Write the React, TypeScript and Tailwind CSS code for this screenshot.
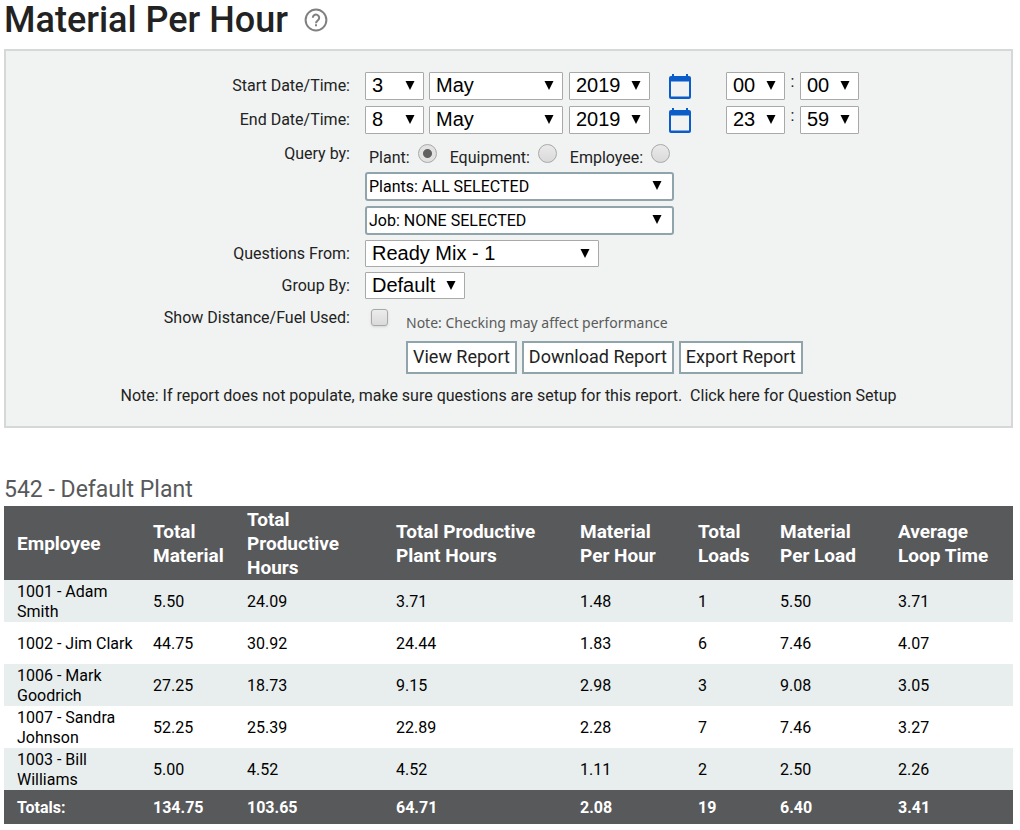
import { useState } from 'react';
import type { ReactNode } from 'react';

const columns = [
  { label: 'Employee', width: 'w-[136px]' },
  { label: 'Total Material', width: 'w-[94px]' },
  { label: 'Total Productive Hours', width: 'w-[149px]' },
  { label: 'Total Productive Plant Hours', width: 'w-[184px]' },
  { label: 'Material Per Hour', width: 'w-[118px]' },
  { label: 'Total Loads', width: 'w-[82px]' },
  { label: 'Material Per Load', width: 'w-[118px]' },
  { label: 'Average Loop Time', width: 'w-[128px]' }
];

const rows = [
  ['1001 - Adam Smith', '5.50', '24.09', '3.71', '1.48', '1', '5.50', '3.71'],
  ['1002 - Jim Clark', '44.75', '30.92', '24.44', '1.83', '6', '7.46', '4.07'],
  ['1006 - Mark Goodrich', '27.25', '18.73', '9.15', '2.98', '3', '9.08', '3.05'],
  ['1007 - Sandra Johnson', '52.25', '25.39', '22.89', '2.28', '7', '7.46', '3.27'],
  ['1003 - Bill Williams', '5.00', '4.52', '4.52', '1.11', '2', '2.50', '2.26']
];

const totals = ['Totals:', '134.75', '103.65', '64.71', '2.08', '19', '6.40', '3.41'];

const dates = [
  { id: 'start', label: 'Start Date/Time:', day: '3', hour: '00', minute: '00' },
  { id: 'end', label: 'End Date/Time:', day: '8', hour: '23', minute: '59' }
];

function Arrow({ className }: { className: string }) {
  return (
    <svg viewBox="0 0 10 9" className={`pointer-events-none absolute h-[9px] w-[10px] ${className}`} aria-hidden="true">
      <path d="M0.500 0h9L5 9z" fill="#000" />
    </svg>
  );
}

type SelectProps = { id?: string; label?: string; value: string; className: string };

function Select({ id, label, value, className }: SelectProps) {
  return (
    <div className={`relative ${className}`}>
      <select
        id={id}
        aria-label={label}
        className="block h-full w-full appearance-none rounded-[1px] border border-[#a9a9a9] bg-white pb-0.5 pl-1.5 font-['Liberation_Sans',sans-serif] text-xl leading-6 text-black"
      >
        <option>{value}</option>
      </select>
      <Arrow className="right-[9px] top-[9px]" />
    </div>
  );
}

function ListSelect({ label, value }: { label: string; value: string }) {
  return (
    <div className="relative h-[29px] w-[309px]">
      <select
        aria-label={label}
        className="block h-full w-full appearance-none rounded-[3px] border-2 border-[#90a4ab] bg-white pl-0.5 text-base leading-5 text-black"
      >
        <option>{value}</option>
      </select>
      <Arrow className="right-3 top-[9px]" />
    </div>
  );
}

function CalendarIcon() {
  return (
    <svg viewBox="0 0 22 25" className="h-[25px] w-[22px]" aria-hidden="true">
      <path
        d="M3 0h2v2h12V0h2v2h1a2 2 0 0 1 2 2v19a2 2 0 0 1-2 2H2a2 2 0 0 1-2-2V4a2 2 0 0 1 2-2h1zM2 7.500v15h18v-15z"
        fill="#0a5cc8"
        fillRule="evenodd"
      />
    </svg>
  );
}

function FormRow({ label, htmlFor, className, children }: { label: string; htmlFor?: string; className: string; children: ReactNode }) {
  return (
    <div className={`flex gap-[15px] ${className}`}>
      <label htmlFor={htmlFor} className="w-[344px] shrink-0 pt-1 text-right leading-5">
        {label}
      </label>
      {children}
    </div>
  );
}

export default function App() {
  const [queryBy, setQueryBy] = useState('Plant');

  return (
    <div className="bg-white px-1 font-[Roboto,sans-serif] text-base text-[#222]">
      <header className="flex h-[49px] items-start gap-4">
        <h1 className="text-4xl font-medium leading-10 text-[#222]">Material Per Hour</h1>
        <button type="button" aria-label="Help" className="mt-2">
          <svg viewBox="0 0 24 24" className="size-6" fill="none" stroke="#808080" strokeWidth="2" aria-hidden="true">
            <circle cx="12" cy="12" r="10.4" />
            <path d="M8.8 9.8a3.2 3.2 0 1 1 5.4 2.3c-1.200 1.100-2.200 1.500-2.200 3.100" />
            <path d="M12 16.300v2" />
          </svg>
        </button>
      </header>

      <form className="mr-[3px] border-2 border-[#d4d8d8] bg-[#f0f3f2] pb-5 pt-[21px]" onSubmit={(e) => e.preventDefault()}>
        {dates.map((d) => (
          <FormRow key={d.id} label={d.label} htmlFor={`${d.id}-day`} className="h-[34px]">
            <div className="flex h-7">
              <Select id={`${d.id}-day`} value={d.day} className="w-[59px]" />
              <Select label="Month" value="May" className="ml-[5px] w-[134px]" />
              <Select label="Year" value="2019" className="ml-1.5 w-[81px]" />
              <button type="button" aria-label="Pick a date" className="ml-[19px]">
                <CalendarIcon />
              </button>
              <Select label="Hour" value={d.hour} className="ml-[35px] w-[59px]" />
              <span className="w-[15px] text-center leading-5">:</span>
              <Select label="Minute" value={d.minute} className="w-[59px]" />
            </div>
          </FormRow>
        ))}

        <FormRow label="Query by:" className="h-8">
          <div className="flex gap-[13px] pl-1">
            {['Plant', 'Equipment', 'Employee'].map((name) => (
              <label key={name} className="flex gap-2 pt-2 leading-5">
                {name}:
                <input
                  type="radio"
                  name="query-by"
                  checked={queryBy === name}
                  onChange={() => setQueryBy(name)}
                  className="-mt-1 size-[19px] appearance-none rounded-full border border-[#a8a8a8] bg-linear-to-b from-[#eaeaea] to-[#dadada] checked:bg-[radial-gradient(circle,#606060_4px,#e2e2e2_5px)]"
                />
              </label>
            ))}
          </div>
        </FormRow>

        <div className="ml-[359px] flex flex-col gap-[5px]">
          <ListSelect label="Plants" value="Plants: ALL SELECTED" />
          <ListSelect label="Job" value="Job: NONE SELECTED" />
        </div>

        <FormRow label="Questions From:" htmlFor="questions" className="mt-[5px] h-8">
          <Select id="questions" value="Ready Mix - 1" className="h-[27px] w-[234px]" />
        </FormRow>
        <FormRow label="Group By:" htmlFor="group" className="h-8">
          <Select id="group" value="Default" className="h-[27px] w-[100px]" />
        </FormRow>
        <FormRow label="Show Distance/Fuel Used:" htmlFor="distance" className="h-[37px]">
          <div className="flex gap-[18px] pl-1.5">
            <input
              id="distance"
              type="checkbox"
              className="mt-[5px] size-[17px] appearance-none rounded-[3px] border border-[#a8a8a8] bg-linear-to-b from-[#ececec] to-[#dadada] shadow-sm checked:bg-[#606060]"
            />
            <span className="pt-[9px] font-['Noto_Sans',sans-serif] text-sm leading-5 text-[#5a5a5a]">
              Note: Checking may affect performance
            </span>
          </div>
        </FormRow>

        <div className="ml-[400px] flex gap-[5px] text-lg">
          {['View Report', 'Download Report', 'Export Report'].map((name) => (
            <button key={name} type="button" className="h-[33px] border-2 border-[#90a4ab] bg-white px-[5px] pb-0.5 leading-5">
              {name}
            </button>
          ))}
        </div>

        <p className="mt-3 text-center leading-5">
          Note: If report does not populate, make sure questions are setup for this report.&nbsp;{' '}
          <a href="#question-setup">Click here for Question Setup</a>
        </p>
      </form>

      <h2 className="mt-[46px] text-[23px] leading-8 text-[#58595b]">542 - Default Plant</h2>
      <div className="mr-[3px]">
        <table className="w-full table-fixed border-collapse text-left text-black">
          <colgroup>
            {columns.map((c) => (
              <col key={c.label} className={c.width} />
            ))}
          </colgroup>
          <thead className="bg-[#58595b] text-[19px] leading-6 text-white">
            <tr>
              {columns.map((c) => (
                <th key={c.label} scope="col" className="pl-[13px] pr-2 pt-0.5 font-bold">
                  {c.label}
                </th>
              ))}
            </tr>
          </thead>
          <tbody>
            {rows.map((row) => (
              <tr key={row[0]} className="h-[42px] odd:bg-[#e8eeee]">
                {row.map((cell, i) => (
                  <td key={i} className="pl-[13px] pt-0.5 leading-5">
                    {cell}
                  </td>
                ))}
              </tr>
            ))}
          </tbody>
          <tfoot className="bg-[#58595b] text-white">
            <tr className="h-[34px]">
              {totals.map((cell, i) => (
                <td key={i} className="pl-[13px] pt-0.5 font-bold">
                  {cell}
                </td>
              ))}
            </tr>
          </tfoot>
        </table>
      </div>
    </div>
  );
}
